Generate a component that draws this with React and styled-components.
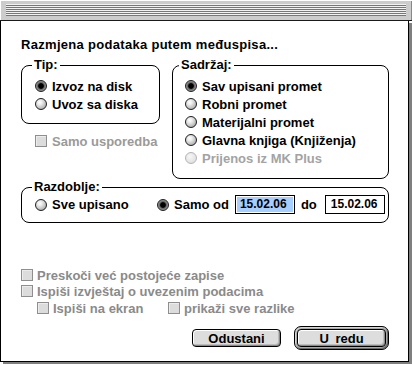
import React from 'react';
import styled, { createGlobalStyle } from 'styled-components';

const Global = createGlobalStyle`
  html, body { margin: 0; padding: 0; background: #fff; }
  body {
    font-family: "Liberation Sans", Arial, sans-serif;
    font-size: 13px;
    font-weight: 700;
    color: #000;
  }
  * { box-sizing: border-box; }
`;

const Screen = styled.div`
  width: 412px;
  height: 365px;
  overflow: hidden;
  background: #fff;
  display: flex;
  flex-direction: column;
`;

const TitleBar = styled.div`
  height: 21px;
  background: #cccccc;
  border-bottom: 1px solid #1a1a1a;
  box-shadow: inset 1px 1px 0 #fff, inset -1px 0 0 #888;
  padding: 4px 6px 0 6px;
`;

const Stripes = styled.div`
  height: 12px;
  background: repeating-linear-gradient(to bottom, #f2f2f2 0 1px, #777 1px 2px);
`;

const Window = styled.div`
  width: 409px;
  border: 1px solid #000;
  border-top: none;
  background: #fff;
  box-shadow: 3px 2px 0 #7f7f7f;
  padding: 16px 19px 11px 20px;
  display: flex;
  flex-direction: column;
`;

const Heading = styled.div`
  line-height: 16px;
  white-space: nowrap;
  letter-spacing: 0.3px;
`;

const Columns = styled.div`
  display: flex;
  align-items: flex-start;
  gap: 12px;
  margin-top: 4px;
`;

const LeftCol = styled.div`
  display: flex;
  flex-direction: column;
  width: 139px;
  flex: none;
`;

const Group = styled.fieldset`
  margin: 0;
  min-width: 0;
  border: 1px solid #000;
  border-radius: 8px;
  padding: 0 0 ${p => p.$pb}px ${p => p.$pl}px;
  width: ${p => p.$w};
  flex: none;
`;

const Legend = styled.legend`
  padding: 0 2px;
  margin-left: ${p => p.$ml}px;
  line-height: 16px;
`;

const OptionList = styled.div`
  display: flex;
  flex-direction: column;
  padding-top: 4px;
`;

const Option = styled.div`
  display: flex;
  align-items: center;
  gap: 5px;
  height: 18px;
  white-space: nowrap;
  color: ${p => (p.$disabled ? '#a3a3a3' : '#000')};
  width: ${p => p.$w || 'auto'};
  flex: none;
`;

const Radio = styled.span`
  width: 12px;
  height: 12px;
  border-radius: 50%;
  flex: none;
  border: 1px solid ${p => (p.$disabled ? '#b4b4b4' : '#1e1e1e')};
  background: ${p =>
    p.$checked
      ? 'radial-gradient(circle at 50% 50%, #000 0 2.4px, #3a3a3a 2.9px, #6e6e6e 3.6px, #9a9a9a 5px)'
      : p.$disabled
      ? 'radial-gradient(circle at 40% 35%, #f6f6f6 0, #e2e2e2 70%)'
      : 'radial-gradient(circle at 38% 34%, #fff 0, #ececec 25%, #bdbdbd 65%, #8c8c8c 100%)'};
`;

const Check = styled.span`
  width: 12px;
  height: 12px;
  flex: none;
  border: 1px solid #8e8e8e;
  background: #dcdcdc;
  box-shadow: inset 1px 1px 0 #ececec;
`;

const CheckItem = styled.div`
  display: flex;
  align-items: center;
  gap: 4px;
  height: 16px;
  white-space: nowrap;
  color: #8a8a8a;
  width: ${p => p.$w || 'auto'};
  flex: none;
`;

const SoloCheck = styled(CheckItem)`
  height: 18px;
  margin-top: 8px;
  padding-left: 14px;
  gap: 5px;
  color: #9a9a9a;
`;

const PeriodRow = styled.div`
  display: flex;
  align-items: center;
  height: 19px;
`;

const Field = styled.div`
  width: 60px;
  height: 19px;
  border: 1px solid #000;
  padding: 1px;
  display: flex;
  margin-left: ${p => p.$ml}px;
  flex: none;
`;

const FieldText = styled.span`
  flex: 1;
  font-size: 12px;
  line-height: 15px;
  padding-left: ${p => p.$pl}px;
  background: ${p => (p.$selected ? '#a6ceff' : 'transparent')};
  white-space: nowrap;
`;

const Word = styled.span`
  margin-left: ${p => p.$ml}px;
`;

const Checks = styled.div`
  display: flex;
  flex-direction: column;
  margin-top: 44px;
`;

const SubRow = styled.div`
  display: flex;
  padding-left: 16px;
  margin-top: 1px;
`;

const Buttons = styled.div`
  display: flex;
  justify-content: flex-end;
  align-items: center;
  gap: 13px;
  margin-top: 10px;
`;

const PushButton = styled.button`
  font: inherit;
  font-weight: 700;
  font-size: 13px;
  width: 89px;
  height: 18px;
  padding: 0;
  border: 1px solid #000;
  border-radius: 4px;
  background: #dddddd;
  color: #000;
  line-height: 15px;
  box-shadow: inset 1px 1px 0 #fff, inset -1px -1px 0 #8a8a8a, inset -2px -2px 0 #bcbcbc;
  word-spacing: ${p => p.$ws || 0}px;
`;

const DefaultRing = styled.div`
  display: flex;
  padding: 2px;
  border: 1px solid #000;
  border-radius: 7px;
  background: #a9a9a9;
  box-shadow: inset 1px 1px 0 #d6d6d6, inset -1px -1px 0 #6a6a6a;
`;

export default function App() {
  return (
    <Screen>
      <Global />
      <TitleBar>
        <Stripes />
      </TitleBar>
      <Window>
        <Heading>Razmjena podataka putem međuspisa...</Heading>
        <Columns>
          <LeftCol>
            <Group $w="139px" $pl={13} $pb={10}>
              <Legend $ml={-3}>Tip:</Legend>
              <OptionList>
                <Option><Radio $checked />Izvoz na disk</Option>
                <Option><Radio />Uvoz sa diska</Option>
              </OptionList>
            </Group>
            <SoloCheck><Check />Samo usporedba</SoloCheck>
          </LeftCol>
          <Group $w="217px" $pl={12} $pb={11}>
            <Legend $ml={-6}>Sadržaj:</Legend>
            <OptionList>
              <Option><Radio $checked />Sav upisani promet</Option>
              <Option><Radio />Robni promet</Option>
              <Option><Radio />Materijalni promet</Option>
              <Option><Radio />Glavna knjiga (Knjiženja)</Option>
              <Option $disabled><Radio $disabled />Prijenos iz MK Plus</Option>
            </OptionList>
          </Group>
        </Columns>
        <Group $w="100%" $pl={13} $pb={8}>
          <Legend $ml={-3}>Razdoblje:</Legend>
          <PeriodRow>
            <Option $w="122px"><Radio />Sve upisano</Option>
            <Option><Radio $checked />Samo od</Option>
            <Field $ml={6}><FieldText $selected $pl={3}>15.02.06</FieldText></Field>
            <Word $ml={6}>do</Word>
            <Field $ml={8}><FieldText $pl={4}>15.02.06</FieldText></Field>
          </PeriodRow>
        </Group>
        <Checks>
          <CheckItem><Check />Preskoči već postojeće zapise</CheckItem>
          <CheckItem><Check />Ispiši izvještaj o uvezenim podacima</CheckItem>
          <SubRow>
            <CheckItem $w="131px"><Check />Ispiši na ekran</CheckItem>
            <CheckItem><Check />prikaži sve razlike</CheckItem>
          </SubRow>
        </Checks>
        <Buttons>
          <PushButton>Odustani</PushButton>
          <DefaultRing>
            <PushButton $ws={3}>U redu</PushButton>
          </DefaultRing>
        </Buttons>
      </Window>
    </Screen>
  );
}
